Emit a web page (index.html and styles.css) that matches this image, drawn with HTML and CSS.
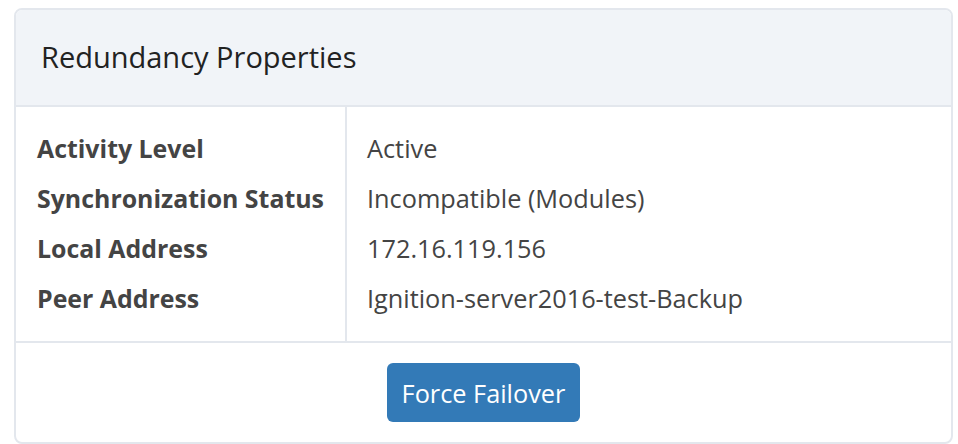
FILE: index.html
```html
<!DOCTYPE html>
<html>
<head>
<meta charset="utf-8">
<link rel="stylesheet" href="styles.css">
</head>
<body>
<div class="card">
  <div class="card-header">Redundancy Properties</div>
  <div class="props">
    <div class="col labels">
      <div class="row">Activity Level</div>
      <div class="row">Synchronization Status</div>
      <div class="row">Local Address</div>
      <div class="row">Peer Address</div>
    </div>
    <div class="col values">
      <div class="row">Active</div>
      <div class="row">Incompatible (Modules)</div>
      <div class="row">172.16.119.156</div>
      <div class="row">Ignition-server2016-test-Backup</div>
    </div>
  </div>
  <div class="card-footer">
    <button class="btn">Force Failover</button>
  </div>
</div>
</body>
</html>
```
FILE: styles.css
```css
html, body {
  margin: 0;
  padding: 0;
  background: #ffffff;
}
body {
  font-family: "Open Sans", "Noto Sans", sans-serif;
  color: #444444;
}
.card {
  margin: 8px 5px 0 14px;
  height: 436px;
  box-sizing: border-box;
  border: 2px solid #e3e7ed;
  border-radius: 8px;
  overflow: hidden;
  display: flex;
  flex-direction: column;
}
.card-header {
  height: 97px;
  flex: none;
  box-sizing: border-box;
  background: #f1f4f8;
  border-bottom: 2px solid #e3e7ed;
  display: flex;
  align-items: center;
  padding-left: 25px;
  padding-bottom: 2px;
  font-size: 29px;
  color: #222222;
}
.props {
  display: flex;
  flex: none;
  border-bottom: 2px solid #e3e7ed;
}
.col {
  padding: 16px 0 18px;
}
.labels {
  width: 331px;
  box-sizing: border-box;
  padding-left: 21px;
  border-right: 2px solid #e3e7ed;
  font-weight: 700;
}
.values {
  padding-left: 20px;
}
.row {
  height: 50px;
  display: flex;
  align-items: center;
  font-size: 25.3px;
  white-space: nowrap;
}
.labels .row {
  font-size: 24.9px;
}
.card-footer {
  flex: 1;
  display: flex;
  justify-content: center;
  align-items: flex-start;
  padding-top: 20px;
}
.btn {
  width: 193px;
  height: 59px;
  border: none;
  border-radius: 6px;
  background: #337ab7;
  color: #ffffff;
  font-family: "Open Sans", "Noto Sans", sans-serif;
  font-size: 25.3px;
  padding: 0;
}
```
